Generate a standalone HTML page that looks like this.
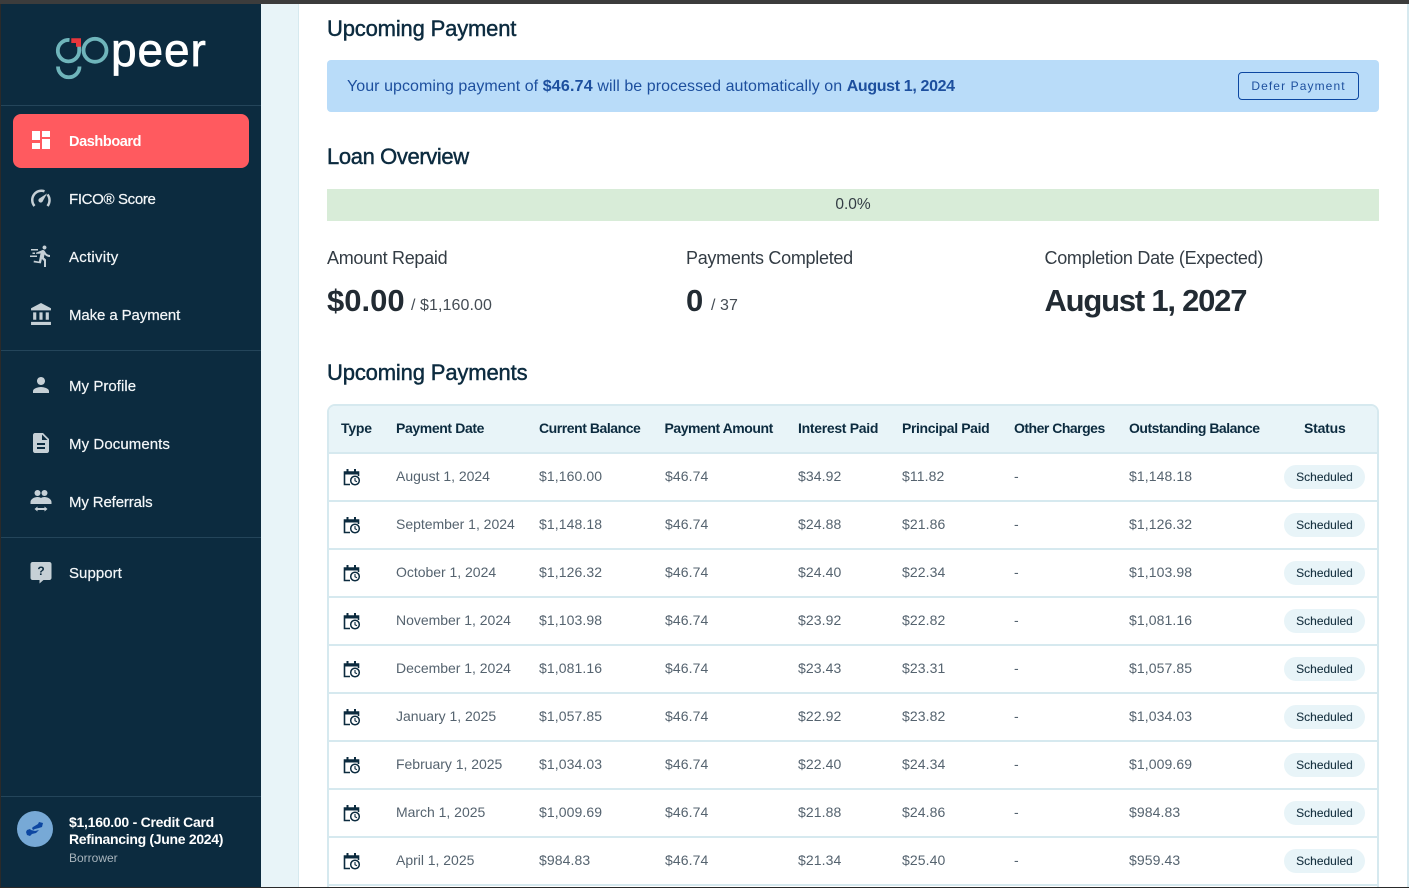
<!DOCTYPE html>
<html><head><meta charset="utf-8"><style>
html{margin:0;padding:0;width:1409px;height:888px;overflow:hidden}
body{margin:0;padding:0;width:1409px;height:888px;position:relative;overflow:hidden;background:#fff;font-family:"Liberation Sans",sans-serif;color:#0c2b3f}
div,span{position:absolute;white-space:nowrap}
svg{position:absolute;display:block}
b,i{font-style:normal}
.nav{left:69px;font-size:15px;line-height:20px;color:#f4f7f9;letter-spacing:-.05px;-webkit-text-stroke:.2px #f4f7f9}
.ln{left:1px;width:260px;height:1px;background:#24455a}
.h{left:327px;font-size:22px;line-height:28px;color:#0c2b3f;-webkit-text-stroke:.45px #0c2b3f;letter-spacing:-.17px}
.lab{font-size:18px;line-height:24px;color:#333c44;letter-spacing:-.29px}
.big{font-size:31px;line-height:36px;font-weight:bold;color:#222b33}
.sm{font-size:16px;line-height:20px;color:#444c54;letter-spacing:.08px}
.r{left:329px;width:1048px;height:46px;border-bottom:2px solid #d6e9ef}
.r span{top:-1px;line-height:46px;font-size:14px;color:#55636f;letter-spacing:.1px}
.r span.p{left:955px;top:11px;width:81px;height:24px;line-height:24px;border-radius:12px;background:#e8f4f8;color:#15303f;font-size:12px;text-align:center;letter-spacing:0;-webkit-text-stroke:.1px #15303f}
.r svg{left:14px;top:14px}
.r span.c1{left:67px;letter-spacing:-.02px}.c2{left:210px}.c3{left:336px}.c4{left:469px}.c5{left:573px}.c6{left:685px}.c7{left:800px}
.th{top:418px;font-size:14px;line-height:20px;font-weight:bold;color:#0c2b3f;letter-spacing:-.45px}
</style></head><body>
<svg width="0" height="0" style="left:0;top:0"><symbol id="cal" viewBox="0 0 18 18"><path d="M4.500 1v3M12 1v3" stroke="#0c2b3f" stroke-width="2" fill="none"/><path d="M1 4h15v2.500H1z" fill="#0c2b3f"/><path d="M7 16.500H1.500V4h14v4" stroke="#0c2b3f" stroke-width="1.600" fill="none"/><circle cx="12" cy="12.500" r="4.300" fill="#fff" stroke="#0c2b3f" stroke-width="1.500"/><path d="M12 10v2.800l2 .9" stroke="#0c2b3f" stroke-width="1.100" fill="none"/></symbol></svg>
<div style="left:0;top:0;width:1409px;height:4px;background:#3c3c3c"></div>
<div style="left:0;top:4px;width:1px;height:884px;background:#2a2a2a"></div>
<div style="left:1px;top:4px;width:260px;height:884px;background:#0c2b3f"></div>
<div style="left:261px;top:4px;width:37px;height:884px;background:#e8f4f8"></div>
<div style="left:298px;top:4px;width:1px;height:884px;background:#d6e9ef"></div>
<div style="left:1407px;top:4px;width:2px;height:884px;background:#d6e9ef"></div>

<svg style="left:50px;top:30px" width="70" height="52" viewBox="50 30 70 52" fill="none">
<path d="M69.500 40A10.700 10.700 0 1 0 79.200 50.500V46" stroke="#6fb5bb" stroke-width="3.800"/>
<path d="M71.300 38.300H81V46.800H76V43H71.300z" fill="#e8363c"/>
<circle cx="95" cy="50.300" r="11.500" stroke="#6fb5bb" stroke-width="3.800"/>
<path d="M58 66.500A10.700 10.700 0 0 0 79.500 66.500" stroke="#6fb5bb" stroke-width="3.800"/>
</svg>
<span style="left:111px;top:24px;font-size:46px;line-height:52px;color:#fff;letter-spacing:.9px;-webkit-text-stroke:.7px #fff">peer</span>

<div class="ln" style="top:105px"></div>
<div style="left:13px;top:114px;width:236px;height:54px;border-radius:8px;background:#ff5a5f"></div>
<svg style="left:32px;top:131px" width="18" height="18" viewBox="3 3 18 18" fill="#fff"><path d="M3 12h8V3H3zm0 9h8v-6H3zm10 0h8V11h-8zm0-18v6h8V3z"/></svg>
<span class="nav" style="top:132px;color:#fff;font-weight:bold;font-size:14.500px;-webkit-text-stroke:0;letter-spacing:-.4px">Dashboard</span>

<svg style="left:29px;top:186px" width="24" height="24" viewBox="0 0 24 24" fill="none"><path d="M5.500 20A9.200 9.200 0 0 1 15.500 5.300M18.500 8.500A9.200 9.200 0 0 1 18.500 20" stroke="#c6d0d6" stroke-width="2.500"/><path d="M10.100 15.900a2.300 2.300 0 0 0 3.300 0l4.700-8.500-8 5.200a2.300 2.300 0 0 0 0 3.300z" fill="#c6d0d6"/></svg>
<span class="nav" style="top:190px;letter-spacing:-.34px">FICO® Score</span>

<svg style="left:29px;top:244px" width="24" height="24" viewBox="0 0 24 24" fill="#c6d0d6"><path d="M15.500 5.500c1.100 0 2-.9 2-2s-.9-2-2-2-2 .9-2 2 .9 2 2 2zM11.900 19.400l1-4.400 2.100 2v6h2v-7.500l-2.100-2 .6-3c1.300 1.500 3.300 2.500 5.500 2.500v-2c-1.900 0-3.500-1-4.300-2.400l-1-1.600c-.4-.6-1-1-1.700-1-.3 0-.5.1-.8.1L7 8.800v1h3.500l1-.4-1.600 8.100-5-.9-.3 1.800z"/><path d="M2 5h7v1.500H2zM3.500 8.500H6V10H3.500zM1 11.500h7V13H1z"/></svg>
<span class="nav" style="top:248px;letter-spacing:.25px">Activity</span>

<svg style="left:30px;top:303px" width="22" height="22" viewBox="1.500 1 20 21" fill="#c6d0d6"><path d="M4 10v7h3v-7zm6 0v7h3v-7zM2 22h19v-3H2zm14-12v7h3v-7zM11.500 1L2 6v2h19V6z"/></svg>
<span class="nav" style="top:306px;letter-spacing:-.1px">Make a Payment</span>

<div class="ln" style="top:350px"></div>

<svg style="left:29px;top:373px" width="24" height="24" viewBox="0 0 24 24" fill="#c6d0d6"><path d="M12 12c2.210 0 4-1.790 4-4s-1.790-4-4-4-4 1.790-4 4 1.790 4 4 4zm0 2c-2.670 0-8 1.340-8 4v2h16v-2c0-2.660-5.330-4-8-4z"/></svg>
<span class="nav" style="top:377px;letter-spacing:.05px">My Profile</span>

<svg style="left:29px;top:431px" width="24" height="24" viewBox="0 0 24 24" fill="#c6d0d6"><path d="M14 2H6c-1.100 0-2 .9-2 2v16c0 1.100.9 2 2 2h12c1.100 0 2-.9 2-2V8zm2 16H8v-2h8zm0-4H8v-2h8zm-3-5V3.500L18.500 9z"/></svg>
<span class="nav" style="top:435px;letter-spacing:.08px">My Documents</span>

<svg style="left:29px;top:489px" width="24" height="24" viewBox="0 0 24 24" fill="#c6d0d6"><circle cx="8.500" cy="4" r="3"/><circle cx="15.500" cy="4" r="3"/><path d="M1.500 15v-2c0-3 4-5 7-5 1.500 0 2.700.4 3.500 1 .8-.6 2-1 3.500-1 3 0 7 2 7 5v2z"/><path d="M5.500 20l3-2.500V19h7v-1.500l3 2.500-3 2.500V21h-7v1.500z"/></svg>
<span class="nav" style="top:493px;letter-spacing:-.13px">My Referrals</span>

<div class="ln" style="top:537px"></div>

<svg style="left:30px;top:561px" width="22" height="24" viewBox="0 0 22 24"><path d="M2.500 1h17c1 0 2 1 2 2v14c0 1-1 2-2 2h-6l-4 3.500V19h-7c-1 0-2-1-2-2V3c0-1 1-2 2-2z" fill="#c6d0d6"/><text x="11" y="14" font-family="Liberation Sans" font-size="12" font-weight="bold" fill="#0c2b3f" text-anchor="middle">?</text></svg>
<span class="nav" style="top:564px;letter-spacing:.05px">Support</span>

<div class="ln" style="top:796px"></div>
<div style="left:17px;top:811px;width:36px;height:36px;border-radius:50%;background:#77a9d6"></div>
<svg style="left:25px;top:819px" width="20" height="20" viewBox="0 0 20 20" fill="#0d47a1"><path d="M8 8l5-3 1-2 4 1-1 4-3 1-4 1-2 1-1-2zM2 11l3-1 1 1 4 1 4-1-3 3-4 1-2 2-3-1-1-3z"/></svg>
<span style="left:69px;top:814px;font-size:14px;line-height:17px;font-weight:bold;color:#fff;letter-spacing:-.26px">$1,160.00 - Credit Card</span>
<span style="left:69px;top:831px;font-size:14px;line-height:17px;font-weight:bold;color:#fff;letter-spacing:-.3px">Refinancing (June 2024)</span>
<span style="left:69px;top:850px;font-size:12px;line-height:16px;color:#a9b5bd">Borrower</span>

<span class="h" style="top:15px;letter-spacing:-.17px">Upcoming Payment</span>
<div style="left:327px;top:60px;width:1052px;height:52px;border-radius:4px;background:#b9dcf9"></div>
<span style="left:347px;top:77px;font-size:16px;line-height:20px;color:#1d4f9e;letter-spacing:.06px">Your upcoming payment of <b style="letter-spacing:.2px">$46.74</b> will be processed automatically on <b style="letter-spacing:-.35px">August 1, 2024</b></span>
<div style="left:1238px;top:72px;width:119px;height:26px;border:1px solid #0d47a1;border-radius:4px"></div>
<span style="left:1238px;top:76px;width:121px;text-align:center;font-size:12px;line-height:20px;color:#1d4f9e;letter-spacing:1.100px">Defer Payment</span>

<span class="h" style="top:143px;letter-spacing:-.38px">Loan Overview</span>
<div style="left:327px;top:189px;width:1052px;height:32px;background:#d8ecd8"></div>
<span style="left:327px;top:195px;width:1052px;text-align:center;font-size:15.500px;line-height:20px;color:#333c44">0.0%</span>

<span class="lab" style="left:327px;top:246px">Amount Repaid</span>
<span class="lab" style="left:686px;top:246px">Payments Completed</span>
<span class="lab" style="left:1044.500px;top:246px">Completion Date (Expected)</span>
<span class="big" style="left:327px;top:283px">$0.00</span>
<span class="sm" style="left:411px;top:296px">/ $1,160.00</span>
<span class="big" style="left:686px;top:283px">0</span>
<span class="sm" style="left:711px;top:296px">/ 37</span>
<span class="big" style="left:1044.500px;top:283px;letter-spacing:-1.220px">August 1, 2027</span>

<span class="h" style="top:359px;letter-spacing:-.15px">Upcoming Payments</span>

<div style="left:327px;top:404px;width:1048px;height:500px;border:2px solid #d6e9ef;border-radius:8px"></div>
<div style="left:329px;top:406px;width:1048px;height:46px;background:#e8f4f8;border-radius:6px 6px 0 0;border-bottom:2px solid #d6e9ef"></div>
<span class="th" style="left:341px;letter-spacing:-.2px">Type</span>
<span class="th" style="left:396px;letter-spacing:-.38px">Payment Date</span>
<span class="th" style="left:539px">Current Balance</span>
<span class="th" style="left:664.500px">Payment Amount</span>
<span class="th" style="left:798px;letter-spacing:-.3px">Interest Paid</span>
<span class="th" style="left:902px;letter-spacing:-.38px">Principal Paid</span>
<span class="th" style="left:1014px;letter-spacing:-.5px">Other Charges</span>
<span class="th" style="left:1129px;letter-spacing:-.5px">Outstanding Balance</span>
<span class="th" style="left:1304px;letter-spacing:-.2px">Status</span>

<div class="r" style="top:454px"><svg width="18" height="18"><use href="#cal"/></svg><span class="c1">August 1, 2024</span><span class="c2">$1,160.00</span><span class="c3">$46.74</span><span class="c4">$34.92</span><span class="c5">$11.82</span><span class="c6">-</span><span class="c7">$1,148.18</span><span class="p">Scheduled</span></div>
<div class="r" style="top:502px"><svg width="18" height="18"><use href="#cal"/></svg><span class="c1">September 1, 2024</span><span class="c2">$1,148.18</span><span class="c3">$46.74</span><span class="c4">$24.88</span><span class="c5">$21.86</span><span class="c6">-</span><span class="c7">$1,126.32</span><span class="p">Scheduled</span></div>
<div class="r" style="top:550px"><svg width="18" height="18"><use href="#cal"/></svg><span class="c1">October 1, 2024</span><span class="c2">$1,126.32</span><span class="c3">$46.74</span><span class="c4">$24.40</span><span class="c5">$22.34</span><span class="c6">-</span><span class="c7">$1,103.98</span><span class="p">Scheduled</span></div>
<div class="r" style="top:598px"><svg width="18" height="18"><use href="#cal"/></svg><span class="c1">November 1, 2024</span><span class="c2">$1,103.98</span><span class="c3">$46.74</span><span class="c4">$23.92</span><span class="c5">$22.82</span><span class="c6">-</span><span class="c7">$1,081.16</span><span class="p">Scheduled</span></div>
<div class="r" style="top:646px"><svg width="18" height="18"><use href="#cal"/></svg><span class="c1">December 1, 2024</span><span class="c2">$1,081.16</span><span class="c3">$46.74</span><span class="c4">$23.43</span><span class="c5">$23.31</span><span class="c6">-</span><span class="c7">$1,057.85</span><span class="p">Scheduled</span></div>
<div class="r" style="top:694px"><svg width="18" height="18"><use href="#cal"/></svg><span class="c1">January 1, 2025</span><span class="c2">$1,057.85</span><span class="c3">$46.74</span><span class="c4">$22.92</span><span class="c5">$23.82</span><span class="c6">-</span><span class="c7">$1,034.03</span><span class="p">Scheduled</span></div>
<div class="r" style="top:742px"><svg width="18" height="18"><use href="#cal"/></svg><span class="c1">February 1, 2025</span><span class="c2">$1,034.03</span><span class="c3">$46.74</span><span class="c4">$22.40</span><span class="c5">$24.34</span><span class="c6">-</span><span class="c7">$1,009.69</span><span class="p">Scheduled</span></div>
<div class="r" style="top:790px"><svg width="18" height="18"><use href="#cal"/></svg><span class="c1">March 1, 2025</span><span class="c2">$1,009.69</span><span class="c3">$46.74</span><span class="c4">$21.88</span><span class="c5">$24.86</span><span class="c6">-</span><span class="c7">$984.83</span><span class="p">Scheduled</span></div>
<div class="r" style="top:838px"><svg width="18" height="18"><use href="#cal"/></svg><span class="c1">April 1, 2025</span><span class="c2">$984.83</span><span class="c3">$46.74</span><span class="c4">$21.34</span><span class="c5">$25.40</span><span class="c6">-</span><span class="c7">$959.43</span><span class="p">Scheduled</span></div>

<div style="left:0;top:887px;width:1409px;height:1px;background:#2a2a2a"></div>
</body></html>
